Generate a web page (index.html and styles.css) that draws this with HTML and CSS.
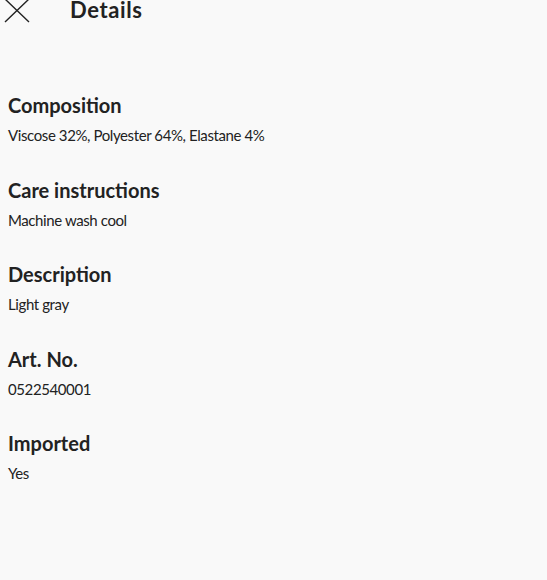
FILE: index.html
```html
<!DOCTYPE html>
<html lang="en">
<head>
<meta charset="utf-8">
<link rel="stylesheet" href="styles.css">
</head>
<body>
<div class="page">
  <header class="header">
    <button class="close" aria-label="Close">
      <svg class="close-icon" width="26" height="24" viewBox="0 0 26 24"><path d="M1 -1 L25 22 M25 -1 L1 22" stroke="#222" stroke-width="1.4" fill="none"/></svg>
    </button>
    <h1 class="title">Details</h1>
  </header>
  <main class="details">
    <section class="item">
      <h2 class="item-title">Composition</h2>
      <p class="item-text">Viscose 32%, Polyester 64%, Elastane 4%</p>
    </section>
    <section class="item">
      <h2 class="item-title">Care instructions</h2>
      <p class="item-text">Machine wash cool</p>
    </section>
    <section class="item">
      <h2 class="item-title">Description</h2>
      <p class="item-text">Light gray</p>
    </section>
    <section class="item">
      <h2 class="item-title">Art. No.</h2>
      <p class="item-text">0522540001</p>
    </section>
    <section class="item">
      <h2 class="item-title">Imported</h2>
      <p class="item-text">Yes</p>
    </section>
  </main>
</div>
</body>
</html>
```
FILE: styles.css
```css
html, body {
  margin: 0;
  padding: 0;
  background: #f9f9f9;
}
body {
  font-family: Lato, "Noto Sans", sans-serif;
  color: #222;
  width: 547px;
  height: 580px;
  overflow: hidden;
}
.page {
  padding: 0 8px;
}
.header {
  display: flex;
  align-items: flex-start;
  height: 22px;
}
.close {
  background: none;
  border: 0;
  padding: 0;
  margin-left: -4px;
  width: 26px;
  height: 22px;
  display: flex;
}
.close-icon {
  overflow: visible;
}
.title {
  margin: 0 0 0 40px;
  font-size: 22px;
  font-weight: 700;
  line-height: 20px;
  letter-spacing: 0.6px;
}
.details {
  padding-top: 69px;
}
.item {
  height: 84.5px;
}
.item-title {
  margin: 0;
  font-size: 20px;
  font-weight: 700;
  line-height: 28px;
}
.item-text {
  margin: 5px 0 0;
  font-size: 15px;
  line-height: 22px;
  letter-spacing: -0.4px;
}
```
